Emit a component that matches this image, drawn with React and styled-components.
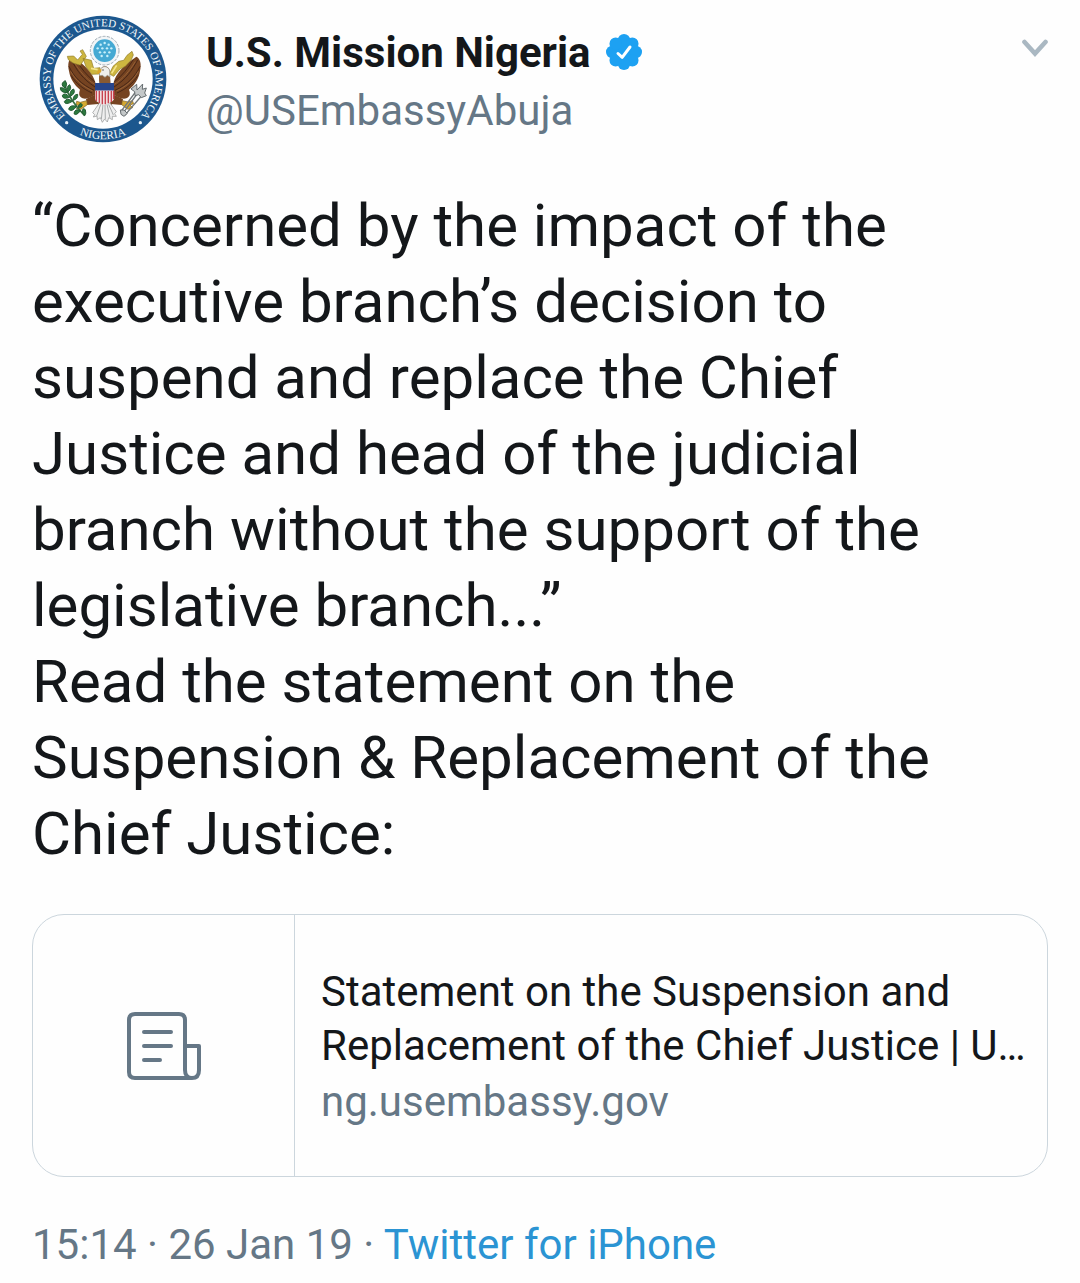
import React from "react";
import styled, { createGlobalStyle } from "styled-components";

const ink = "#14171a";
const slate = "#657786";
const line = "#ccd6dd";

const GlobalStyle = createGlobalStyle`
  *, *::before, *::after { box-sizing: border-box; }
  body {
    margin: 0;
    background: #fefefe;
    color: ${ink};
    font-family: Roboto, "Liberation Sans", sans-serif;
  }
`;

const Tweet = styled.article`
  display: flex;
  flex-direction: column;
  padding: 15px 32px 8px;
`;

const Header = styled.header`
  display: flex;
  align-items: flex-start;
  padding-left: 7px;
`;

const SealSvg = styled.svg`
  flex: none;
  width: 128px;
  height: 128px;
`;

const Author = styled.div`
  flex: 1;
  min-width: 0;
  padding: 9px 0 0 39px;
`;

const NameRow = styled.div`
  display: flex;
  align-items: center;
  gap: 14px;
`;

const Name = styled.h1`
  margin: 0;
  font-size: 42px;
  line-height: 58px;
  font-weight: 700;
`;

const Handle = styled.p`
  margin: 0;
  color: ${slate};
  font-size: 42px;
  line-height: 58px;
`;

const BadgeSvg = styled.svg`
  flex: none;
  width: 38px;
  height: 38px;
`;

const MenuButton = styled.button`
  display: flex;
  margin: 20px 0 0;
  padding: 0;
  border: 0;
  background: none;
  color: #aab8c2;
  cursor: pointer;
`;

const Body = styled.p`
  margin: 45px 0 42px;
  padding-right: 16px;
  font-size: 60px;
  line-height: 76px;
`;

const Card = styled.a`
  display: flex;
  min-height: 263px;
  border: 1px solid ${line};
  border-radius: 32px;
  color: inherit;
  text-decoration: none;
  overflow: hidden;
`;

const Thumb = styled.div`
  display: flex;
  flex: none;
  align-items: center;
  justify-content: center;
  width: 262px;
  border-right: 1px solid ${line};
  color: ${slate};
`;

const CardText = styled.div`
  display: flex;
  flex: 1;
  flex-direction: column;
  justify-content: center;
  min-width: 0;
  padding: 4px 16px 0 26px;
`;

const CardTitle = styled.span`
  font-size: 42px;
  line-height: 54px;
`;

const CardDomain = styled.span`
  color: ${slate};
  font-size: 42px;
  line-height: 58px;
`;

const Meta = styled.footer`
  padding-top: 39px;
  color: ${slate};
  font-size: 42px;
  line-height: 58px;
`;

const SourceLink = styled.a`
  color: #2b94d3;
  text-decoration: none;
`;

function Wing() {
  return (
    <g>
      <path
        d="M196 232 C190 206 166 180 128 155 C116 160 112 178 117 198 C121 222 133 240 150 254 C146 264 147 272 152 276 C162 286 180 280 198 268 Z"
        fill="#754321"
      />
      <path
        d="M124 165 C142 198 158 222 195 246 M117 184 C132 216 154 238 192 256 M137 164 C154 190 170 212 194 230 M123 211 C140 238 160 252 186 264"
        fill="none"
        stroke="#482716"
        strokeWidth="3"
      />
      <path d="M131 170 C149 198 168 222 194 238 M122 199 C139 229 160 245 188 258" fill="none" stroke="#a8703f" strokeWidth="2" />
    </g>
  );
}

function Seal() {
  const dots = [
    [212, 119], [224, 114], [236, 119],
    [203, 130], [217, 130], [231, 130], [244, 130],
    [210, 142], [224, 142], [238, 142],
    [215, 153], [232, 153],
  ];
  return (
    <SealSvg viewBox="27 30 384 384" role="img" aria-label="Embassy seal">
      <defs>
        <path id="seal-top" d="M219 380 A158 158 0 0 1 219 64 A158 158 0 0 1 219 380" />
        <path id="seal-bottom" d="M38 222 A181 181 0 0 0 400 222" />
      </defs>
      <circle cx="219" cy="222" r="190" fill="#1c578e" />
      <circle cx="219" cy="222" r="149" fill="#fefefe" />
      <g fill="#f3f7fa" fontFamily='"Liberation Serif", serif' textAnchor="middle">
        <text fontSize="33">
          <textPath href="#seal-top" startOffset="50%">EMBASSY OF THE UNITED STATES OF AMERICA</textPath>
        </text>
        <text fontSize="35">
          <textPath href="#seal-bottom" startOffset="50%">NIGERIA</textPath>
        </text>
      </g>
      <circle cx="110" cy="353" r="5" fill="#e6eff6" />
      <circle cx="331" cy="353" r="5" fill="#e6eff6" />

      <circle cx="224" cy="137" r="43" fill="#f2f5f7" stroke="#9eaab3" strokeWidth="3" strokeDasharray="9 4" />
      <circle cx="224" cy="137" r="34" fill="#45a9d3" />
      <g fill="#c9f0fa">
        {dots.map(([x, y]) => (
          <circle key={`${x}-${y}`} cx={x} cy={y} r="3.6" />
        ))}
      </g>

      <Wing />
      <g transform="translate(447 0) scale(-1 1)">
        <Wing />
      </g>

      <path
        d="M112 154 L131 153 L143 165 L157 148 L150 138 L158 134 L169 154 L151 181 L129 174 L115 164 Z M159 160 L184 166 L191 190 L210 188 L208 207 L185 208 L168 185 Z M306 139 L291 151 L281 166 L266 169 L249 184 L238 207 L251 214 L270 192 L286 184 L304 164 L310 150 Z"
        fill="#cdb640"
        stroke="#917d2c"
        strokeWidth="2"
      />
      <path d="M183 190 L203 194 M260 181 L245 205" stroke="#f5e58c" strokeWidth="5" />

      <path d="M208 236 C206 216 207 196 216 187 C227 179 239 188 239 199 L242 238 Z" fill="#8a5a33" />
      <path d="M209 212 C206 198 212 187 222 185 C233 184 240 192 239 202 L240 216 L232 211 L225 217 L217 211 Z" fill="#efefec" stroke="#95978f" strokeWidth="2" />
      <path d="M215 193 C205 192 200 199 202 208 L213 202 Z" fill="#dba72c" />
      <circle cx="219" cy="195" r="2" fill="#333" />

      <path d="M200 288 L250 288 L240 310 L209 310 Z" fill="#754321" />
      <path
        d="M208 294 L188 323 L194 329 L190 336 L201 333 L202 344 L211 338 L217 352 L224 342 L232 351 L236 338 L247 344 L247 334 L259 334 L254 326 L259 320 L240 294 Z"
        fill="#efefef"
        stroke="#8e9090"
        strokeWidth="2"
      />
      <path d="M212 298 L200 333 M219 298 L214 342 M225 298 L226 342 M231 298 L240 338 M236 298 L250 330" stroke="#999d9d" strokeWidth="2.5" />

      <path d="M198 268 L168 282 L171 300 L205 297 Z M248 268 L279 282 L276 300 L243 297 Z" fill="#754321" />
      <path
        d="M170 287 L151 292 L140 289 L138 299 L147 302 L139 311 L153 313 L172 299 Z M277 287 L294 291 L307 287 L311 296 L300 300 L308 308 L294 313 L275 299 Z"
        fill="#d5a931"
        stroke="#7c602b"
        strokeWidth="2"
      />

      <rect x="195" y="234" width="57" height="23" fill="#28458b" />
      <path d="M195 257 H252 V282 C248 292 232 296 223 300 C213 296 199 292 195 282 Z" fill="#f4eeee" />
      <path d="M199 257 V288 M208 257 V294 M217 257 V298 M226 257 V298 M235 257 V295 M244 257 V291 M251 257 V282" stroke="#c84350" strokeWidth="4.5" />

      <path d="M103 237 C112 267 134 301 164 332" fill="none" stroke="#34703e" strokeWidth="5" />
      <path
        d="M106 249 C91 242 96 231 106 227 Q114 237 106 249 Z M112 263 Q90 263 91 248 Q107 247 112 263 Z M119 277 Q97 285 97 271 Q106 260 119 277 Z M127 289 Q106 302 103 290 Q111 276 127 289 Z M140 304 Q125 323 116 313 Q119 298 140 304 Z M151 317 Q139 334 132 326 Q134 309 151 317 Z M114 261 Q108 244 119 239 Q127 251 114 261 Z M121 274 Q117 257 131 252 Q138 265 121 274 Z M129 286 Q130 268 143 268 Q145 282 129 286 Z M145 307 Q148 289 157 299 Q157 309 145 307 Z M157 323 Q157 305 166 314 Q170 326 164 332 Z"
        fill="#2c7a3e"
        stroke="#245c34"
        strokeWidth="3"
      />

      <path d="M278 326 L330 255 M284 331 L337 270 M273 319 L319 258" stroke="#71777a" strokeWidth="4" />
      <path
        d="M303 252 L320 238 L321 255 L338 237 L337 253 L349 249 L344 264 L349 272 L334 278 L326 269 L315 272 L314 260 Z M271 315 L282 315 L292 325 L282 334 L273 328 Z"
        fill="#c4c8c9"
        stroke="#666d70"
        strokeWidth="3"
      />
    </SealSvg>
  );
}

function VerifiedBadge() {
  return (
    <BadgeSvg viewBox="0 0 38 38" role="img" aria-label="Verified account">
      <g fill="#1da1f2">
        <circle cx="19" cy="18" r="14" />
        {[0, 45, 90, 135, 180, 225, 270, 315].map((turn) => (
          <circle key={turn} cx="19" cy="6.2" r="6.2" transform={`rotate(${turn} 19 18)`} />
        ))}
      </g>
      <path d="M13 19.5 L17.2 23.3 L25 13" fill="none" stroke="#fff" strokeWidth="3" strokeLinecap="round" strokeLinejoin="round" />
    </BadgeSvg>
  );
}

function Chevron() {
  return (
    <svg width="26" height="26" viewBox="0 0 26 26" fill="none" aria-hidden="true">
      <path d="M2.5 7 L13 18.5 L23.5 7" stroke="currentColor" strokeWidth="4.6" strokeLinecap="round" />
    </svg>
  );
}

function ArticleIcon() {
  return (
    <svg width="76" height="70" viewBox="0 0 76 70" fill="none" stroke="currentColor" strokeWidth="4" strokeLinecap="round" strokeLinejoin="round" aria-hidden="true">
      <path d="M67 67 H9 Q3 67 3 61 V9 Q3 3 9 3 H53 Q59 3 59 9 V59 Q59 67 66 67 Q73 67 73 59 V35 H60" />
      <path d="M18 21 H45 M18 35 H45 M18 49 H34" />
    </svg>
  );
}

export default function App() {
  return (
    <>
      <GlobalStyle />
      <Tweet>
        <Header>
          <Seal />
          <Author>
            <NameRow>
              <Name>U.S. Mission Nigeria</Name>
              <VerifiedBadge />
            </NameRow>
            <Handle>@USEmbassyAbuja</Handle>
          </Author>
          <MenuButton type="button" aria-label="More options">
            <Chevron />
          </MenuButton>
        </Header>
        <Body>
          “Concerned by the impact of the executive branch’s decision to suspend and replace the Chief
          Justice and head of the judicial branch without the support of the legislative branch...”
          <br />
          Read the statement on the Suspension &amp; Replacement of the Chief Justice:
        </Body>
        <Card href="#statement">
          <Thumb>
            <ArticleIcon />
          </Thumb>
          <CardText>
            <CardTitle>Statement on the Suspension and Replacement of the Chief Justice | U…</CardTitle>
            <CardDomain>ng.usembassy.gov</CardDomain>
          </CardText>
        </Card>
        <Meta>
          15:14 · 26 Jan 19 · <SourceLink href="#source">Twitter for iPhone</SourceLink>
        </Meta>
      </Tweet>
    </>
  );
}
